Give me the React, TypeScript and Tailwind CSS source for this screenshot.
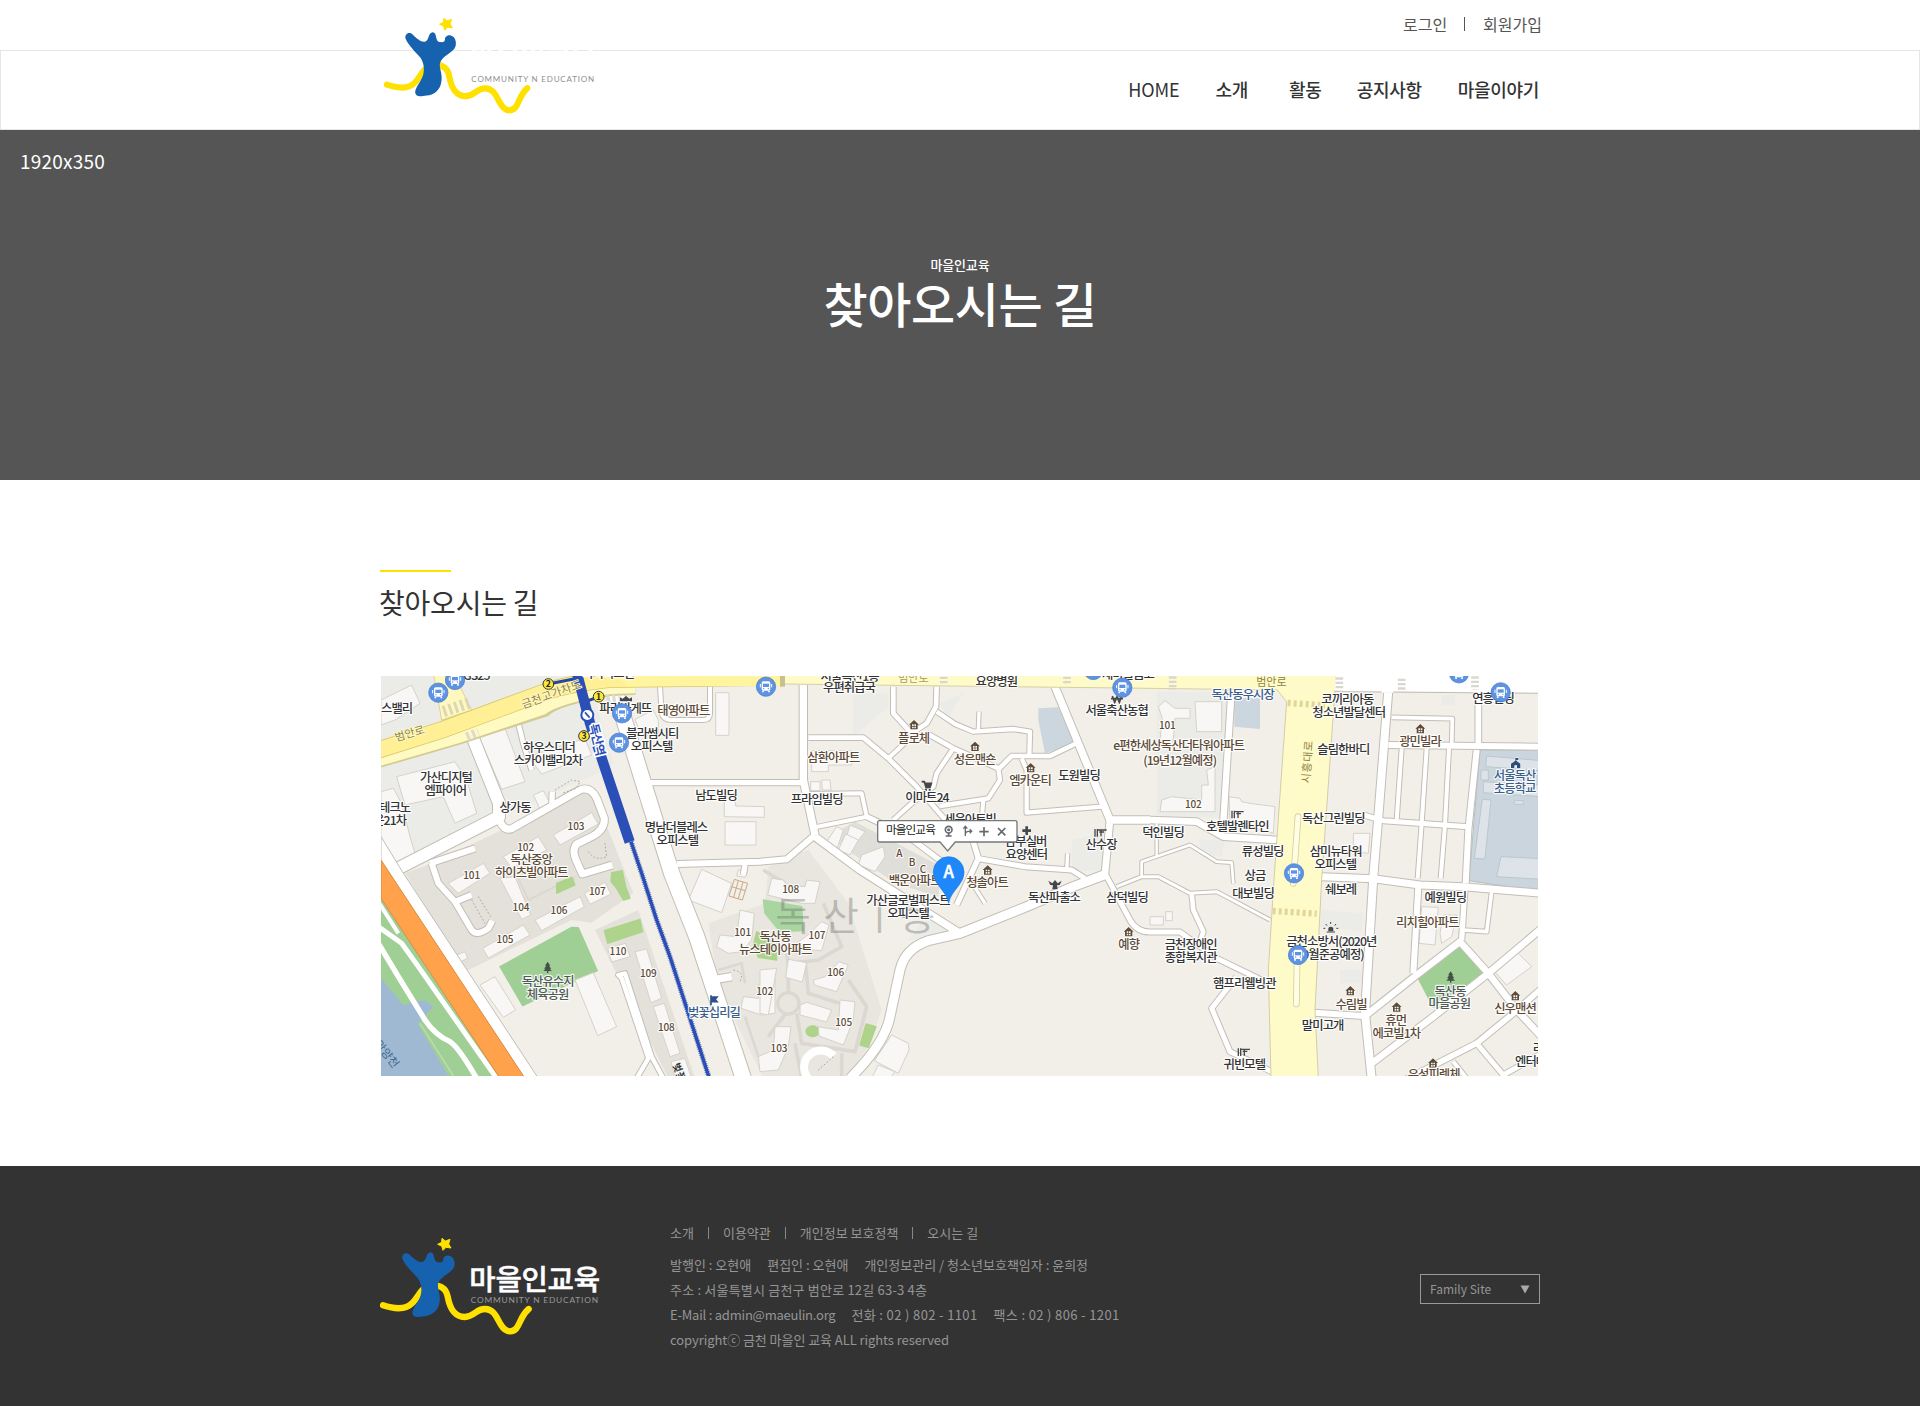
const SANS = "font-['Noto_Sans_CJK_KR','Noto_Sans',sans-serif]";

type Road = [string, number];
type Tone = 'dark' | 'brown' | 'blue' | 'park';
type Label = [string, number, number, Tone?];

const TONES: Record<Tone, string> = {
  dark: '#333436',
  brown: '#5d4b38',
  blue: '#3b5f8c',
  park: '#4f5a55',
};

// Streets: path and width. One map unit is a third of a pixel.
const ROADS: Road[] = [
  ['M288,190 L372,400 L372,440 L60,600', 36],
  ['M425,140 L445,220 L470,300', 14],
  ['M368,440 Q385,485 410,476 L535,405 L610,362 Q645,345 665,385 L688,445 Q690,480 650,500 L605,522 Q590,540 603,570 L622,612 L712,585', 21],
  ['M530,405 L532,365', 16],
  ['M165,580 L300,535', 18],
  ['M170,580 L190,640 L240,695 L290,675', 18],
  ['M240,695 L290,780 Q305,800 340,775 L352,752', 18],
  ['M855,50 L860,130 Q865,150 890,150 L985,150 Q1005,150 1005,130 L1005,50', 12],
  ['M715,45 L805,338 L890,610 L965,800 L1105,1225', 46],
  ['M815,338 L1285,338', 16],
  ['M905,582 L1155,575 L1235,568 L1320,495', 18],
  ['M1110,585 L1105,615', 16],
  ['M1285,45 L1285,330 L1320,495', 22],
  ['M1300,203 L1465,203 L1540,265 L1625,350 L1720,460', 14],
  ['M1555,50 L1555,130 L1610,190 L1655,160 L1683,110 L1685,50', 14],
  ['M1685,125 L1740,162 L1795,185 L1915,177 L1965,185 L1963,255', 13],
  ['M1812,125 L1810,182', 10],
  ['M1540,265 L1615,195', 12],
  ['M1655,190 L1735,235 L1870,295', 14],
  ['M1735,235 L1685,310 L1675,350 L1610,400 L1555,450', 13],
  ['M1870,298 L1910,258 L2025,258 L2100,222', 14],
  ['M1870,298 L1875,330 L1840,385 L1695,408', 13],
  ['M1825,390 L1820,450', 12],
  ['M1940,265 L1955,300 L1955,428 L2180,410', 13],
  ['M2040,50 L2205,450 L2325,450', 22],
  ['M2205,450 L2190,610', 20],
  ['M1300,372 L1460,370 L1475,440 L1320,472', 12],
  ['M1475,440 L1600,500 L1700,575', 16],
  ['M1320,500 L1455,600 L1755,790', 22],
  ['M2195,612 L2095,650 L1955,710 L1755,790 L1660,812 Q1590,835 1575,900 L1545,1040 Q1530,1120 1425,1225', 27],
  ['M1795,515 L1810,565 L1745,705', 16],
  ['M1805,565 L1950,590 L2090,600 L2130,625', 15],
  ['M2078,550 L2075,600', 10],
  ['M1798,650 L1830,700', 10],
  ['M2190,610 L2265,750 Q2285,786 2325,786 L2415,786 L2525,865 L2690,945', 15],
  ['M2300,620 L2300,575 L2445,525 L2525,575 L2570,578 L2575,640', 8],
  ['M2225,650 L2300,620 L2350,620 L2445,670 L2525,665 L2685,750', 9],
  ['M2450,672 L2455,720 L2485,785 L2475,815', 14],
  ['M2585,920 L2510,1015 L2565,1145 L2690,1205', 15],
  ['M2325,450 L2465,455 L2545,500 L2710,510', 20],
  ['M2570,55 L2545,455', 19],
  ['M2345,460 L2345,560', 7],
  ['M3040,60 L3010,440 L2995,620 L2970,1030 L2990,1225', 24],
  ['M3050,142 L3232,146 L3230,225', 11],
  ['M3310,65 L3310,225', 17],
  ['M3040,225 L3500,230', 18],
  ['M3080,235 L3065,450', 12],
  ['M3155,235 L3140,460 L3128,625', 12],
  ['M3222,235 L3210,465 L3197,625', 12],
  ['M3305,240 L3280,480 L3272,640', 18],
  ['M2965,435 L3025,452 L3280,470', 15],
  ['M2840,620 L2995,626 L3135,645 L3265,650 L3500,670', 21],
  ['M3130,650 L3115,910', 18],
  ['M3270,650 L3260,810', 16],
  ['M3350,665 L3335,785 L3265,780', 11],
  ['M2970,1038 L3125,915 L3255,815 L3340,910 L3425,1020 L3500,1100', 20],
  ['M2990,1180 L3175,1040 L3340,910 L3500,775', 20],
  ['M2818,1028 L2965,1038', 18],
  ['M3090,1230 L3305,1120 L3415,1030 L3500,955', 17],
  ['M3305,1120 L3385,1215 L3500,1150', 15],
  ['M3235,1175 L3275,1225', 12],
  ['M1000,932 L1070,920', 22],
  ['M785,1225 L820,1165 L740,925 L730,915 L750,910 L830,1160 L865,1225', 13],
];

const BUILDINGS: string[] = [
  '18,90 110,45 135,100 60,150 18,165',
  '65,320 240,275 275,330 305,430 240,460 205,380 90,405',
  '18,365 55,355 80,400 105,500 120,550 60,580 18,520',
  '312,200 388,170 450,335 380,358',
  '460,260 630,205 650,255 500,312',
  '475,375 505,362 525,400 495,418',
  '535,495 650,428 670,462 555,525',
  '385,560 490,500 515,540 410,595',
  '220,640 325,580 345,610 250,670',
  '375,625 420,620 467,735 440,748',
  '480,750 615,680 628,710 500,782',
  '628,670 690,637 708,672 645,703',
  '323,835 445,765 465,795 340,864',
  '245,855 270,845 278,865 255,876',
  '315,945 360,920 422,1020 385,1042',
  '600,930 655,908 725,1070 668,1097',
  '698,835 752,820 765,860 710,876',
  '780,845 815,837 860,985 828,998',
  '835,1010 868,1000 915,1150 885,1160',
  '888,1175 930,1165 950,1225 900,1225',
  '1022,68 1062,68 1062,196 1022,196',
  '780,148 835,120 850,150 850,190 800,200',
  '1048,380 1080,375 1082,408 1168,410 1168,442 1048,440',
  '1050,455 1143,455 1143,525 1050,525',
  '980,598 1070,640 1040,728 940,690',
  '1090,600 1118,600 1110,622 1085,618',
  '1095,720 1138,730 1130,810 1100,845 1060,850 1025,830 1035,795 1085,800',
  '1150,945 1200,925 1200,1030 1160,1035 1098,1015 1105,980 1150,985',
  '1190,625 1225,630 1235,645 1290,650 1295,630 1335,635 1320,700 1280,700 1178,675',
  '1265,820 1305,790 1340,755 1362,765 1340,842 1312,840',
  '1155,900 1205,895 1180,1035 1155,1030',
  '1240,868 1295,878 1282,936 1232,922',
  '1315,930 1350,920 1392,875 1420,885 1385,965 1318,945',
  '1275,1005 1295,997 1370,1020 1355,1056 1275,1035',
  '1330,1070 1390,1080 1395,990 1440,995 1435,1050 1405,1125 1332,1098',
  '1150,1160 1195,1140 1200,1070 1248,1070 1240,1130 1210,1200 1155,1205',
  '1550,1095 1600,1120 1602,1140 1570,1210 1498,1172',
  '1510,1185 1560,1205 1545,1225 1490,1225',
  '1310,242 1430,242 1430,285 1360,285 1360,305 1310,305',
  '1307,335 1335,335 1335,362 1307,362',
  '1340,330 1365,330 1368,360 1342,360',
  '1385,470 1405,480 1385,540 1355,515',
  '1425,465 1470,485 1440,525 1412,510',
  '1460,555 1525,530 1530,560 1500,605 1450,585',
  '1412,492 1450,510 1425,555 1390,540',
  '2350,110 2370,92 2400,115 2445,115 2445,145 2400,145 2395,210 2355,210 2362,145',
  '2460,95 2540,95 2540,185 2465,185',
  '2495,300 2520,290 2520,425 2355,425 2360,390 2390,380 2480,390 2480,345 2500,345',
  '2562,380 2595,385 2600,395 2625,400 2700,410 2695,490 2565,455',
  '2935,490 2985,490 2980,550 2935,545',
  '2325,740 2365,740 2365,765 2325,765',
  '2372,725 2392,725 2392,752 2372,752',
  '3140,710 3190,712 3180,825 3132,820',
  '3205,735 3245,735 3230,800 3200,820 3195,790',
  '3350,895 3430,850 3470,890 3395,945',
];

const PARKS: [string, string][] = [
  ['375,890 590,772 610,773 667,902 443,1007', '#a0cf96'],
  ['688,782 795,748 803,785 698,820', '#aed38b'],
  ['545,640 590,622 600,645 545,670', '#aed38b'],
  ['710,608 742,602 752,650 765,685 745,690 725,655 708,635', '#aed38b'],
  ['1165,690 1280,710 1285,782 1215,785 1170,730', '#a9d6a0'],
  ['1145,785 1205,822 1205,870 1150,862 1135,825', '#aed38b'],
  ['1473,1062 1503,1070 1480,1132 1455,1125', '#aed38b'],
  ['3130,925 3260,822 3328,910 3175,1012', '#a0cf96'],
];

const LABELS: Label[] = [
  ['GS25', 305, 18],
  ['스밸리', 66, 118],
  ['하우스디더', 523, 235],
  ['스카이밸리2차', 520, 273],
  ['가산디지털', 214, 325],
  ['엠파이어', 212, 362],
  ['테크노', 60, 414],
  ['운21차', 45, 453],
  ['상가동', 421, 414],
  ['파리바게뜨', 752, 118],
  ['비지니스센', 700, 12],
  ['블라썸시티', 833, 193],
  ['오피스텔', 831, 232],
  ['남도빌딩', 1024, 378],
  ['명남더블레스', 904, 475],
  ['오피스텔', 908, 514],
  ['태영아파트', 926, 123, 'brown'],
  ['독산중앙', 469, 569, 'brown'],
  ['하이츠빌아파트', 470, 610, 'brown'],
  ['101', 291, 617, 'brown'],
  ['102', 453, 531, 'brown'],
  ['103', 604, 470, 'brown'],
  ['104', 439, 711, 'brown'],
  ['105', 391, 808, 'brown'],
  ['106', 553, 722, 'brown'],
  ['107', 668, 664, 'brown'],
  ['108', 875, 1073, 'brown'],
  ['109', 821, 911, 'brown'],
  ['110', 730, 844, 'brown'],
  ['독산유수지', 519, 935, 'park'],
  ['체육공원', 519, 974, 'park'],
  ['벚꽃십리길', 1018, 1030, 'blue'],
  ['101', 1104, 788, 'brown'],
  ['102', 1170, 965, 'brown'],
  ['103', 1213, 1136, 'brown'],
  ['105', 1407, 1058, 'brown'],
  ['106', 1383, 908, 'brown'],
  ['107', 1327, 795, 'brown'],
  ['108', 1248, 658, 'brown'],
  ['독산동', 1201, 800, 'brown'],
  ['뉴스테이아파트', 1202, 840, 'brown'],
  ['서울독산1동', 1425, 20],
  ['우편취급국', 1423, 55],
  ['요양병원', 1865, 37],
  ['새마을금고', 2260, 16],
  ['서울축산농협', 2226, 122],
  ['플로체', 1617, 206, 'brown'],
  ['성은맨숀', 1800, 269, 'brown'],
  ['삼환아파트', 1376, 265, 'brown'],
  ['엠카운티', 1966, 334, 'brown'],
  ['도원빌딩', 2113, 317],
  ['이마트24', 1657, 384],
  ['프라임빌딩', 1326, 390],
  ['세윤아트빌', 1786, 450],
  ['남부실버', 1953, 517],
  ['요양센터', 1955, 556],
  ['산수장', 2179, 526],
  ['A', 1574, 549, 'brown'],
  ['B', 1612, 576, 'brown'],
  ['C', 1645, 597, 'brown'],
  ['백운아파트', 1620, 632, 'brown'],
  ['가산글로벌퍼스트', 1600, 694],
  ['오피스텔', 1600, 732],
  ['청솔아트', 1837, 640, 'brown'],
  ['독산파출소', 2038, 685],
  ['삼덕빌딩', 2257, 683],
  ['예향', 2262, 826, 'brown'],
  ['덕인빌딩', 2365, 488],
  ['101', 2378, 167, 'brown'],
  ['102', 2456, 403, 'brown'],
  ['e편한세상독산더타워아파트', 2412, 229, 'brown'],
  ['(19년12월예정)', 2415, 272, 'brown'],
  ['독산동우시장', 2604, 76, 'blue'],
  ['코끼리아동', 2918, 90],
  ['청소년발달센터', 2922, 129],
  ['슬림한바디', 2906, 240],
  ['독산그린빌딩', 2876, 446],
  ['호텔발렌타인', 2588, 472],
  ['류성빌딩', 2664, 546],
  ['삼미뉴타워', 2883, 546],
  ['오피스텔', 2882, 585],
  ['상금', 2641, 617],
  ['대보빌딩', 2635, 673],
  ['쉐보레', 2898, 659],
  ['광민빌라', 3136, 217, 'brown'],
  ['연흥빌딩', 3355, 87],
  ['서울독산', 3420, 319, 'blue'],
  ['초등학교', 3420, 358, 'blue'],
  ['예원빌딩', 3212, 685],
  ['리치힐아파트', 3158, 760, 'brown'],
  ['금천소방서(2020년', 2870, 815],
  ['9월준공예정)', 2875, 856],
  ['금천장애인', 2448, 825],
  ['종합복지관', 2448, 864],
  ['햄프리웰빙관', 2609, 941],
  ['수림빌', 2929, 1004, 'brown'],
  ['말미고개', 2844, 1067],
  ['휴먼', 3063, 1052, 'brown'],
  ['에코빌1차', 3065, 1093, 'brown'],
  ['독산동', 3226, 965, 'park'],
  ['마을공원', 3224, 1003, 'park'],
  ['신우맨션', 3421, 1017, 'brown'],
  ['귀빈모텔', 2609, 1185],
  ['우성피렌체', 3177, 1216, 'brown'],
  ['리', 3490, 1138],
  ['엔터테', 3468, 1177],
];

const HOUSES: [number, number][] = [
  [1617, 164], [1800, 229], [1967, 293], [1838, 600], [2261, 785],
  [3136, 176], [2926, 962], [3065, 1011], [3421, 977], [3174, 1179],
];

const BUS_STOPS: [number, number][] = [
  [190, 68], [240, 30], [741, 130], [732, 218], [1173, 50], [2155, 0], [2242, 53],
  [2757, 610], [2769, 855], [3252, 10], [3377, 67],
];

const EXITS: [string, number, number][] = [
  ['2', 520, 42],
  ['1', 671, 80],
  ['3', 627, 198],
];

const CROSSWALKS: [number, number][] = [
  [68, 45], [755, 52], [975, 45], [568, 48],
];

function House({ x, y }: { x: number; y: number }) {
  return (
    <g transform={`translate(${x} ${y})`}>
      <path d="M-15,0 L0,-14 L15,0 H11 V14 H-11 V0Z" fill="#5d4b38" stroke="#fff" strokeWidth="3" paintOrder="stroke" />
      <path d="M-6,-1 H-1 V4 H-6Z M1,-1 H6 V4 H1Z M-6,6 H-1 V11 H-6Z M1,6 H6 V11 H1Z" fill="#f2efe9" />
    </g>
  );
}

function BusStop({ x, y }: { x: number; y: number }) {
  return (
    <g transform={`translate(${x} ${y})`}>
      <circle r="29" fill="#5d93e2" stroke="#4479cc" strokeWidth="2" />
      <rect x="-13" y="-16" width="26" height="28" rx="5" fill="#fff" />
      <rect x="-9" y="-9" width="18" height="10" fill="#5d93e2" />
      <path d="M-17,-8 V2 M17,-8 V2" stroke="#fff" strokeWidth="3" />
      <path d="M-9,12 V17 M9,12 V17" stroke="#fff" strokeWidth="5" />
      <circle cx="-7" cy="6" r="2" fill="#5d93e2" />
      <circle cx="7" cy="6" r="2" fill="#5d93e2" />
    </g>
  );
}

function Tree({ x, y }: { x: number; y: number }) {
  return (
    <path
      transform={`translate(${x} ${y})`}
      d="M0,-17 L8,-5 H4 L11,4 H6 L13,11 H2 V17 H-2 V11 H-13 L-6,4 H-11 L-4,-5 H-8Z"
      fill="#465049"
    />
  );
}

function Hotel({ x, y }: { x: number; y: number }) {
  return (
    <path
      transform={`translate(${x} ${y})`}
      d="M-17,-11 V12 M-10,-11 V12 M-10,-8 H18 M-4,-2 H10 M1,-8 V11"
      stroke="#45484b"
      strokeWidth="4"
      fill="none"
    />
  );
}

function DirectionsMap() {
  return (
    <svg
      viewBox="18 18 3471 1200"
      className="block h-[400px] w-[1157px] font-['Noto_Sans_CJK_KR',sans-serif]"
      role="img"
      aria-label="마을인교육 위치 지도"
    >
      <rect x="18" y="18" width="3471" height="1200" fill="#f2efe9" />
      <path d="M18,18 H640 L715,280 L690,300 L380,440 L60,600 L18,540Z" fill="#ebece8" />
      <path d="M380,480 L640,350 L700,480 L775,670 L650,758 L590,750 L270,905 L170,740 L90,610 L170,580Z" fill="#e4e1db" />
      <path d="M660,780 L790,720 L960,1225 L880,1225Z" fill="#e4e1db" />
      <path d="M1240,560 L1300,540 L1420,700 L1520,1020 L1480,1130 L1415,1225 L1165,1225 L1030,950 L1000,760 L1170,700 L1180,590Z" fill="#e9e6df" />
      <path d="M1360,500 L1440,455 L1700,590 L1690,680 L1560,640Z" fill="#e0ded8" />
      <g fill="#ebece8">
        <path d="M1435,70 H1540 V110 L1435,200Z" />
        <path d="M1690,100 L1765,70 L1720,140Z" />
        <path d="M2345,65 H2555 L2545,445 L2345,435Z" />
        <path d="M2090,510 L2185,490 L2180,605 L2090,600Z" />
        <path d="M1660,730 L1735,790 L1600,810Z" />
        <path d="M2840,720 L2965,730 L2960,785 L2835,770Z" />
        <path d="M2895,900 H2960 V940 H2895Z" />
        <path d="M2470,510 L2550,510 L2540,560 L2480,550Z" />
        <path d="M3200,75 H3240 V105 H3200Z" />
      </g>

      <g fill="none" stroke="#dbd8d1" strokeWidth="11">
        <path d="M1165,600 L1230,640 M1235,850 L1240,880 M1240,1020 L1180,1100 M1240,970 L1240,880 L1330,870 L1400,830 L1345,700 M1290,870 L1300,970 L1410,1005 M1420,930 L1475,1010 L1440,1145 L1280,1120 L1265,1030 M1260,1120 L1280,1225 M1400,1150 V1225" />
        <path d="M400,560 L460,690 M460,690 L600,620 M480,570 L600,630" strokeWidth="6" />
        <path d="M1030,900 L1100,880 L1110,940 M1110,1040 L1150,1160" strokeWidth="8" />
      </g>
      <circle cx="1240" cy="1000" r="32" fill="#e9e6df" stroke="#dbd8d1" strokeWidth="10" />

      <path d="M1990,115 L2050,112 L2098,222 L2010,250 L1990,150Z M2578,85 H2655 V177 L2578,170Z" fill="#cbd6de" />
      <path d="M3315,240 H3500 V665 L3282,632Z" fill="#cad5de" stroke="#b4bfc8" strokeWidth="3" />
      <g fill="#dde3e8" stroke="#bcc6ce" strokeWidth="3">
        <path d="M3335,258 L3500,272 V302 L3332,290Z" />
        <path d="M3325,335 L3500,345 V380 L3325,368Z" />
        <path d="M3322,388 L3348,390 L3330,567 L3298,565Z" />
        <path d="M3378,560 L3500,566 V628 L3365,620Z" />
        <path d="M3318,300 H3340 V330 H3318Z M3418,392 H3445 V403 H3418Z" />
      </g>

      <path d="M18,685 L375,1225 H18Z" fill="#a0cf96" />
      <path d="M18,925 L85,1005 L110,998 L150,990 L175,1010 L128,1062 L225,1225 H18Z" fill="#9fb9d2" />
      <path d="M135,1060 L240,1225" stroke="#b9dcae" strokeWidth="5" />
      <g fill="none" stroke="#fff">
        <path d="M10,820 L70,920 L150,1050 Q180,1095 225,1115 Q250,1130 305,1225" strokeWidth="16" />
        <path d="M10,770 L80,820 L130,890 L365,1225" strokeWidth="15" />
        <path d="M10,695 L70,790" strokeWidth="12" />
      </g>

      {PARKS.map(([points, fill]) => (
        <polygon key={points} points={points} fill={fill} stroke={fill} strokeWidth="4" strokeLinejoin="round" />
      ))}
      <ellipse cx="1313" cy="1084" rx="22" ry="18" fill="#aed38b" />
      <g fill="#f8f7f5" stroke="#d5d2cb" strokeWidth="3">
        {BUILDINGS.map((points) => (
          <polygon key={points} points={points} />
        ))}
      </g>

      <g fill="none" stroke="#c3beb5" strokeLinejoin="round">
        {ROADS.map(([d, w]) => (
          <path key={d} d={d} strokeWidth={w + 6} />
        ))}
      </g>
      <g fill="none" stroke="#fff" strokeLinejoin="round">
        {ROADS.map(([d, w]) => (
          <path key={d} d={d} strokeWidth={w} />
        ))}
      </g>
      <path d="M1375,1158 A40,40 0 1 0 1300,1225" fill="none" stroke="#fff" strokeWidth="24" />
      <g fill="none" stroke="#a9a49b" strokeWidth="3" strokeDasharray="5 6">
        <path d="M540,360 L590,330 L615,335 L605,355 L560,370 M640,545 Q660,575 695,560 L690,520 M290,690 L330,760 M310,680 L350,745 M1075,900 Q1110,905 1095,935 M1330,1200 L1375,1160" />
      </g>
      <g fill="none" stroke="#c9a986" strokeWidth="3">
        <path d="M1078,628 L1118,640 L1102,690 L1062,678Z M1070,650 L1110,662 M1090,632 L1076,682 M1104,636 L1090,686" />
      </g>

      <path d="M18,500 L82,605 L490,1225 H445 L18,575Z" fill="#fff" stroke="#c3beb5" strokeWidth="3" />
      <path d="M18,570 L450,1225 H375 L18,685Z" fill="#ffa24b" stroke="#d98a3f" strokeWidth="3" />

      {/* Main arterials */}
      <path d="M175,10 L235,10 L290,120 L200,150Z" fill="#fff9c0" stroke="#ddd397" strokeWidth="3" />
      <path d="M10,265 L250,195 L505,112 Q540,80 700,50 L780,45" fill="none" stroke="#d3cb94" strokeWidth="58" />
      <path d="M10,262 L250,192 L500,108 Q540,78 700,46 L780,43" fill="none" stroke="#fffac2" strokeWidth="53" />
      <path d="M10,240 L200,180 L520,62 Q600,38 700,28 L1155,22" fill="none" stroke="#dac96f" strokeWidth="52" />
      <path d="M10,240 L200,180 L520,62 Q600,38 700,28 L1155,22" fill="none" stroke="#fff096" strokeWidth="47" />
      <path d="M715,15 L1225,10 V48 L760,48Z" fill="#fff59f" />
      <path d="M1225,10 H2890 L2882,18 V58 H2740 L2710,60 L2325,55 L1225,42Z" fill="#fffbc8" stroke="#d6d0a2" strokeWidth="3" />
      <path d="M1215,10 H1230 V50 H1215Z" fill="#c9bf8f" />
      <path d="M2882,15 H3500 V68 L2878,62Z" fill="#fff" />
      <path d="M2878,65 L3500,70" stroke="#c3beb5" strokeWidth="3" />
      <path d="M3020,64 H3055 M3300,68 H3320" stroke="#fff" strokeWidth="8" />
      <path d="M2705,58 L2735,95 L2697,630 L2680,900 L2688,1225 H2830 L2820,1020 L2840,628 L2882,15 H2705Z" fill="#fffbc8" />
      <path d="M2705,58 L2735,95 L2697,630 L2680,900 L2688,1225 M2830,1225 L2820,1020 L2840,628 L2880,60" fill="none" stroke="#d3cda8" strokeWidth="3" />
      <path d="M2769,440 L2755,640" stroke="#d6d0a2" strokeWidth="20" strokeLinecap="round" />
      <path d="M2769,440 L2755,640" stroke="#fffde2" strokeWidth="15" strokeLinecap="round" />
      <path d="M2766,880 L2764,1002" stroke="#d6d0a2" strokeWidth="20" strokeLinecap="round" />
      <path d="M2766,880 L2764,1002" stroke="#fffde2" strokeWidth="15" strokeLinecap="round" />
      <g fill="none" stroke="#e0d59b" strokeWidth="19" strokeDasharray="9 9">
        <path d="M2738,99 L2850,106" />
        <path d="M2693,723 L2825,731" />
        <path d="M205,125 L285,98" strokeWidth="34" stroke="#ddd8b4" />
        <path d="M275,200 L310,186" strokeWidth="26" stroke="#dddad2" />
        <path d="M695,90 L735,85" strokeWidth="32" stroke="#dddad2" />
      </g>
      <g fill="none" stroke="#d9d7cf" strokeWidth="23" strokeDasharray="7 6">
        {CROSSWALKS.map(([x, y]) => (
          <path key={x} d={`M${x + 2325},${y - 26} V${y + 14}`} />
        ))}
        <path d="M1706,20 V42 M2076,20 V42" />
      </g>

      {/* Metro line */}
      <path d="M520,42 L600,26 M640,92 L672,80 M640,192 L655,186" fill="none" stroke="#2846a0" strokeWidth="9" />
      <path d="M606,10 L645,160 L764,516" fill="none" stroke="#2a50b8" strokeWidth="31" />
      <path d="M768,515 L800,610 L845,750 L885,860 L940,1030 L1003,1225" fill="none" stroke="#6b83bd" strokeWidth="16" strokeDasharray="3 3" />
      <path d="M768,515 L800,610 L845,750 L885,860 L940,1030 L1003,1225" fill="none" stroke="#2a4db5" strokeWidth="10" />
      <circle cx="637" cy="135" r="18" fill="#fff" stroke="#2a50b8" strokeWidth="6" />
      <path d="M630,127 L644,143" stroke="#2a50b8" strokeWidth="5" />
      <text
        transform="translate(668 208) rotate(76)"
        textAnchor="middle"
        dominantBaseline="central"
        fontSize="37"
        fontWeight="700"
        fill="#2a50b8"
        stroke="#fff"
        strokeWidth="10"
        strokeLinejoin="round"
        paintOrder="stroke"
        letterSpacing="-2"
      >
        독산역
      </text>

      <g fontSize="33" fill="#8d8145" textAnchor="middle" dominantBaseline="central" stroke="#fffbc8" strokeWidth="5" paintOrder="stroke">
        <text transform="translate(103 187) rotate(-17)">범안로</text>
        <text transform="translate(528 70) rotate(-20)" fontSize="34">금천고가차도</text>
        <text x="1615" y="22" fill="#a79b66">범안로</text>
        <text x="2689" y="32">범안로</text>
        <text transform="translate(2794 275) rotate(-86)" letterSpacing="2">시흥대로</text>
      </g>
      <text
        transform="translate(38 1150) rotate(52)"
        textAnchor="middle"
        dominantBaseline="central"
        fontSize="34"
        fill="#3f6590"
      >
        안양천
      </text>
      <text transform="translate(915 1205) rotate(70)" textAnchor="middle" dominantBaseline="central" fontSize="30" fontWeight="700" fill="#333">
        벚꽃
      </text>

      {/* District name */}
      <g fontSize="116" fontWeight="400" fill="#696a6b" fillOpacity="0.38" textAnchor="middle" dominantBaseline="central">
        <text x="1254" y="728">독</text>
        <text x="1398" y="728">산</text>
        <text x="1513" y="730">ㅣ</text>
        <text x="1627" y="728">동</text>
      </g>

      {HOUSES.map(([x, y]) => (
        <House key={`${x}-${y}`} x={x} y={y} />
      ))}
      <Tree x={518} y={892} />
      <Tree x={3227} y={921} />
      <Hotel x={2588} y={433} />
      <Hotel x={2177} y={488} />
      <Hotel x={2607} y={1146} />
      <path d="M1008,976 V1006 M1008,981 H1026 L1020,988 L1026,995 H1008" fill="#2c5288" stroke="#2c5288" strokeWidth="5" />
      <path d="M735,94 V82 L743,86 L753,78 L763,86 L771,82 V94Z" fill="#45484b" />
      <path d="M1640,335 H1648 L1653,352 H1665 L1669,340 H1650" fill="#45484b" stroke="#45484b" strokeWidth="5" />
      <circle cx="1653" cy="360" r="3.500" fill="#45484b" />
      <circle cx="1664" cy="360" r="3.500" fill="#45484b" />
      <path d="M1955,469 V495 M1942,482 H1968" stroke="#45484b" strokeWidth="8" />
      <path d="M2212,78 L2219,97 L2226,80 L2233,97 L2240,78 M2208,86 H2244" fill="none" stroke="#45484b" strokeWidth="5" />
      <path d="M2020,632 L2032,640 L2040,630 L2048,640 L2060,632 L2054,645 L2046,646 L2048,658 H2032 L2034,646 L2026,645Z" fill="#45484b" />
      <path d="M2860,784 V774 Q2867,766 2875,774 V784Z" fill="#45484b" />
      <path d="M2867,756 V762 M2852,762 L2856,767 M2883,762 L2879,767 M2845,775 H2851 M2884,775 H2890 M2855,786 H2880" fill="none" stroke="#45484b" strokeWidth="3" />
      <path d="M3408,295 V281 L3421,272 V264 H3430 V270 H3424 V272 L3436,281 V295 H3426 V286 H3418 V295Z" fill="#2c4f7c" stroke="#fff" strokeWidth="3" paintOrder="stroke" />

      <g fontWeight="500" textAnchor="middle" strokeLinejoin="round">
        {LABELS.map(([text, x, y, tone = 'dark']) => {
          const unit = /^[0-9A-C]+$/.test(text);
          return (
            <text
              key={`${text}-${x}-${y}`}
              x={x - 1}
              y={y + (unit ? 11 : 12)}
              fill={TONES[tone]}
              stroke="#fff"
              strokeOpacity="0.85"
              strokeWidth="7"
              paintOrder="stroke"
              fontSize={unit ? 30 : 37}
              letterSpacing={unit ? -0.3 : -2.8}
            >
              {text}
            </text>
          );
        })}
      </g>

      {BUS_STOPS.map(([x, y]) => (
        <BusStop key={`${x}-${y}`} x={x} y={y} />
      ))}
      {EXITS.map(([n, x, y]) => (
        <g key={n}>
          <circle cx={x} cy={y} r="16" fill="#fbe73c" stroke="#38342a" strokeWidth="3" />
          <text x={x} y={y + 9} fontSize="26" fontWeight="700" fill="#222" textAnchor="middle">
            {n}
          </text>
        </g>
      ))}

      {/* Destination pin and its callout */}
      <path d="M1721,700 C1714,660 1675,645 1675,606 A46,46 0 0 1 1767,606 C1767,645 1728,660 1721,700Z" fill="#1e88fb" stroke="#1b75dc" strokeWidth="2" />
      <text x="1721" y="624" fontSize="50" fontWeight="500" fill="#fff" stroke="#fff" strokeWidth="1.500" textAnchor="middle">
        A
      </text>
      <path
        d="M1514,452 H1920 Q1926,452 1926,458 V510 Q1926,516 1920,516 H1741 L1718,543 L1695,516 H1514 Q1508,516 1508,510 V458 Q1508,452 1514,452Z"
        fill="#fff"
        stroke="#75787c"
        strokeWidth="4"
      />
      <text x="1533" y="492" fontSize="35" fontWeight="400" fill="#222" letterSpacing="-2.800">
        마을인교육
      </text>
      <g fill="none" stroke="#666a6e" strokeWidth="5">
        <circle cx="1721" cy="479" r="10" />
        <circle cx="1721" cy="479" r="2" />
        <path d="M1721,489 V499 M1712,498 H1730" />
        <path d="M1771,498 V472 M1765,476 L1771,469 L1777,476 M1771,491 Q1773,484 1780,484 H1788 M1784,478 L1790,484 L1784,490" strokeWidth="4" />
        <path d="M1827,471 V499 M1813,485 H1841" />
        <path d="M1869,474 L1891,496 M1891,474 L1869,496" />
      </g>
    </svg>
  );
}

function Logo({ className, nameFill, captionFill }: { className: string; nameFill: string; captionFill: string }) {
  return (
    <svg viewBox="30 80 660 300" preserveAspectRatio="none" className={className} role="img" aria-label="마을인교육">
      <path
        d="M39,288 C75,300 108,302 128,280 C146,262 152,236 178,230 C208,224 228,236 233,262 C240,300 254,322 284,323 C314,322 318,298 345,299 C374,300 380,326 392,345 C402,362 412,366 420,366 C452,364 444,326 476,299"
        fill="none"
        stroke="#ffe100"
        strokeWidth="19"
        strokeLinecap="round"
      />
      <path
        d="M97,148 C94,134 108,126 119,136 C132,148 144,159 156,158 C172,156 166,129 182,129 C196,129 188,156 203,159 C214,160 219,160 220,150 C219,143 229,137 238,139 C252,143 256,158 253,171 C247,192 212,198 204,224 C202,240 212,254 209,276 C206,306 184,319 163,321 C146,323 130,328 127,312 C127,296 146,278 152,258 C157,238 153,220 143,206 C130,190 106,170 97,148Z"
        fill="#1662ae"
      />
      <path
        d="M216,87 L226,95 L240,90 L236,104 L243,116 L228,114 L219,123 L215,110 L203,105 L215,99Z"
        fill="#ffe100"
        stroke="#ffe100"
        strokeWidth="3"
        strokeLinejoin="round"
      />
      <text x="298" y="241" fontSize="86" fill={nameFill} stroke={nameFill} strokeWidth="1.500" textLength="392" className="font-['Noto_Sans_CJK_KR',sans-serif] font-medium">
        마을인교육
      </text>
      <text x="302" y="281" fontSize="25" fill={captionFill} textLength="382" className="font-[Lato,sans-serif] font-normal">
        COMMUNITY N EDUCATION
      </text>
    </svg>
  );
}

export default function App() {
  return (
    <div className={`h-[1406px] w-[1920px] overflow-hidden bg-white ${SANS}`}>
      <header className="relative h-[130px]">
        <div className="mx-auto flex h-[50px] w-[1160px] items-center justify-end pb-[2px] text-base leading-none text-[#555]">
          <a>로그인</a>
          <span className="mr-[18px] ml-[17px] h-[14px] w-px bg-[#555]" />
          <a className="-mr-[2px]">회원가입</a>
        </div>
        <div className="h-20 border border-[#e6e6e6]">
          <nav className="mx-auto flex h-[78px] w-[1160px] items-center justify-end pr-px pb-[2px] text-lg leading-none font-medium tracking-[-0.3px] text-[#333]">
            <a className="font-normal tracking-[-0.1px]">HOME</a>
            <a className="ml-[36px]">소개</a>
            <a className="ml-[41px]">활동</a>
            <a className="ml-[35px]">공지사항</a>
            <a className="ml-[36px]">마을이야기</a>
          </nav>
        </div>
        <Logo className="absolute top-[16px] left-[384px] h-[99px] w-[212px]" nameFill="#ffffff" captionFill="#8f8f8f" />
      </header>

      <section className="flex h-[350px] flex-col bg-[#555] text-white">
        <span className="mt-[21px] ml-5 h-5 text-[19px] leading-5 tracking-[0.2px]">1920x350</span>
        <div className="mt-[84px] flex flex-col items-center">
          <p className="h-5 text-[13px] leading-5 font-medium tracking-[-0.2px]">마을인교육</p>
          <h1 className="-mt-[3px] h-[60px] text-[48px] leading-[60px] font-medium tracking-[-0.4px]">찾아오시는 길</h1>
        </div>
      </section>

      <main className="mx-auto h-[686px] w-[1160px] pt-[90px]">
        <div className="h-[2px] w-[71px] bg-[#ffe100]" />
        <h2 className="mt-[10px] -ml-px h-10 text-[28px] leading-10 tracking-[-0.2px] text-[#333]">찾아오시는 길</h2>
        <div className="mt-[54px] ml-px">
          <DirectionsMap />
        </div>
      </main>

      <footer className="h-60 bg-[#333]">
        <div className="mx-auto flex h-full w-[1160px] text-[13px] text-[#959595]">
          <Logo className="mt-[70px] h-[100px] w-[220px] shrink-0" nameFill="#ffffff" captionFill="#999999" />
          <div className="mt-[54px] ml-[70px] grow leading-[25px] whitespace-nowrap">
            <div className="mb-[7px] flex items-center">
              <a>소개</a>
              <span className="mx-[14px] h-3 w-px bg-[#888]" />
              <a>이용약관</a>
              <span className="mx-[14px] h-3 w-px bg-[#888]" />
              <a>개인정보 보호정책</a>
              <span className="mx-[14px] h-3 w-px bg-[#888]" />
              <a>오시는 길</a>
            </div>
            <div className="flex gap-4">
              <span>발행인 : 오현애</span>
              <span>편집인 : 오현애</span>
              <span>개인정보관리 / 청소년보호책임자 : 윤희정</span>
            </div>
            <p className="tracking-[0.2px]">주소 : 서울특별시 금천구 범안로 12길 63-3 4층</p>
            <div className="flex gap-4">
              <span className="tracking-[-0.22px]">E-Mail : admin@maeulin.org</span>
              <span className="tracking-[0.36px]">전화 : 02 ) 802 - 1101</span>
              <span className="tracking-[0.36px]">팩스 : 02 ) 806 - 1201</span>
            </div>
            <p className="tracking-[-0.06px]">copyrightⓒ 금천 마을인 교육 ALL rights reserved</p>
          </div>
          <button className="mt-[108px] flex h-[30px] w-[120px] items-center justify-between border border-[#999] px-[9px] text-xs leading-none">
            <span>Family Site</span>
            <svg viewBox="0 0 10 9" className="h-[9px] w-[10px]">
              <path d="M0.500,0.500 H9.500 L5,8.500Z" fill="#aaa" />
            </svg>
          </button>
        </div>
      </footer>
    </div>
  );
}
